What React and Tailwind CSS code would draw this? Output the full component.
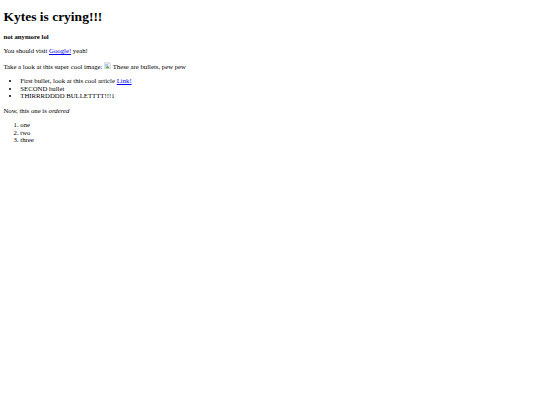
function BrokenImage() {
  return (
    <svg viewBox="0 0 16 16" className="inline-block w-[7px] h-[7px] align-baseline">
      <path d="M1.5 0.5H11L14.5 4V15.5H1.5Z" fill="#f4f7fb" stroke="#a3aab5" />
      <path d="M3 4H9V8L3 11Z" fill="#a8c4ee" />
      <path d="M3 14L8 8L13 14Z" fill="#5aa84f" />
      <path d="M11 0.5V4H14.5" fill="#fff" stroke="#a3aab5" />
    </svg>
  );
}

export default function App() {
  return (
    <div className="min-h-screen bg-white text-black px-[3.4px] pt-[8.5px] font-['Liberation_Serif',serif] text-[6.75px] leading-[7.6px]">
      <h1 className="text-[13.5px] leading-[15.6px] font-bold mb-[9px]">Kytes is crying!!!</h1>
      <h4 className="font-bold mb-[6.75px]">not anymore lol</h4>

      <p className="mb-[6.75px]">
        You should visit <a href="#" className="text-[#0000ee] underline">Google!</a> yeah!
      </p>

      <p className="mb-[6.75px]">
        Take a look at this super cool image: <BrokenImage /> These are bullets, pew pew
      </p>

      <ul className="list-disc pl-[16.9px] mb-[6.75px]">
        <li>First bullet, look at this cool article <a href="#" className="text-[#0000ee] underline">Link!</a></li>
        <li>SECOND bullet</li>
        <li>THIRRRDDDD BULLETTTT!!!1</li>
      </ul>

      <p className="mb-[6.75px]">
        Now, this one is <em>ordered</em>
      </p>

      <ol className="list-decimal pl-[16.9px]">
        <li>one</li>
        <li>two</li>
        <li>three</li>
      </ol>
    </div>
  );
}
